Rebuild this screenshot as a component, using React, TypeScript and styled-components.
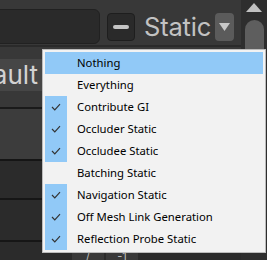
import React from "react";
import styled, { createGlobalStyle } from "styled-components";

const GlobalStyle = createGlobalStyle`
  html, body {
    margin: 0;
    padding: 0;
    background: #383838;
  }
`;

interface IItem {
  label: string;
  checked?: boolean;
  hover?: boolean;
}

const items: IItem[] = [
  { label: "Nothing", hover: true },
  { label: "Everything" },
  { label: "Contribute GI", checked: true },
  { label: "Occluder Static", checked: true },
  { label: "Occludee Static", checked: true },
  { label: "Batching Static" },
  { label: "Navigation Static", checked: true },
  { label: "Off Mesh Link Generation", checked: true },
  { label: "Reflection Probe Static", checked: true },
];

const Window = styled.div`
  position: relative;
  width: 267px;
  height: 260px;
  overflow: hidden;
  display: grid;
  grid-template-columns: 1fr 26px;
  background: #383838;
  font-family: Inter, "Noto Sans", sans-serif;
`;

const Inspector = styled.div`
  display: flex;
  flex-direction: column;
  min-width: 0;
`;

const Header = styled.div`
  height: 47px;
  display: flex;
  align-items: flex-start;
  padding-top: 9px;
  box-sizing: border-box;
  border-bottom: 2px solid #2a2a2a;
`;

const NameField = styled.div`
  width: 110px;
  height: 35px;
  margin-left: -10px;
  box-sizing: border-box;
  background: #2a2a2a;
  border: 1px solid #212121;
  border-radius: 6px;
`;

const Toggle = styled.div`
  margin: 4px 0 0 7px;
  width: 28px;
  height: 28px;
  box-sizing: border-box;
  background: #2a2a2a;
  border: 1px solid #1e1e1e;
  border-radius: 4px;
  display: flex;
  align-items: center;
  justify-content: center;
`;

const Dash = styled.div`
  width: 16px;
  height: 4px;
  border-radius: 2px;
  background: #c4c4c4;
`;

const Label = styled.div`
  margin: 3px 0 0 9px;
  height: 30px;
  line-height: 30px;
  font-size: 25.5px;
  color: #c2c2c2;
  letter-spacing: -0.2px;
`;

const ArrowButton = styled.div`
  margin: 4px 0 0 4px;
  width: 19px;
  height: 28px;
  border-radius: 4px;
  background: #5b5b5b;
  display: flex;
  align-items: center;
  justify-content: center;
`;

const Stripe = styled.div<{ $h: number; $bg: string; $line?: string }>`
  height: ${(p) => p.$h}px;
  flex: none;
  background: ${(p) => p.$bg};
  border-bottom: ${(p) => (p.$line ? `2px solid ${p.$line}` : "none")};
  box-sizing: border-box;
`;

const LayerRow = styled.div`
  height: 62px;
  flex: none;
  padding-top: 12px;
  box-sizing: border-box;
  border-bottom: 2px solid #1a1a1a;
`;

const LayerBox = styled.div`
  height: 32px;
  width: 130px;
  margin-left: -92px;
  background: #464646;
  border-radius: 4px;
  font-size: 26px;
  line-height: 32px;
  color: #d2d2d2;
  text-align: right;
  padding-right: 88px;
  box-sizing: content-box;
`;

const Footer = styled.div`
  flex: 1;
  display: flex;
  align-items: flex-start;
  padding: 9px 0 0 72px;
  gap: 2px;
  background: #2b2b2b;
`;

const FootCell = styled.div`
  width: 32px;
  height: 10px;
  background: #393939;
  color: #bdbdbd;
  font-size: 11px;
  line-height: 10px;
  text-align: center;
  overflow: hidden;
`;

const ScrollBar = styled.div`
  background: #2e2e2e;
  display: flex;
  flex-direction: column;
  align-items: center;
  padding-top: 3px;
  gap: 8px;
`;

const Thumb = styled.div`
  width: 19px;
  flex: 1;
  margin-bottom: 8px;
  border-radius: 10px 10px 0 0;
  background: #5e5e5e;
`;

const Menu = styled.div`
  position: absolute;
  left: 42px;
  top: 49px;
  width: 224px;
  box-sizing: border-box;
  padding: 2px;
  background: #f2f2f2;
  border: 1px solid #bcbcbc;
  font-family: "Noto Sans", "Open Sans", sans-serif;
`;

const Row = styled.div<{ $hover?: boolean }>`
  height: 22px;
  display: flex;
  align-items: center;
  background: ${(p) => (p.$hover ? "#91c9f7" : "transparent")};
`;

const CheckCell = styled.div<{ $on?: boolean }>`
  width: 22px;
  height: 22px;
  flex: none;
  display: flex;
  align-items: center;
  justify-content: center;
  background: ${(p) => (p.$on ? "#91c9f7" : "transparent")};
`;

const Text = styled.span`
  padding-left: 10px;
  font-size: 11.3px;
  line-height: 20px;
  color: #000;
  white-space: nowrap;
`;

const Check = () => (
  <svg width="10" height="8" viewBox="0 0 10 8">
    <path d="M1 4 L3.8 6.8 L9 1.2" fill="none" stroke="#333" strokeWidth="1.2" />
  </svg>
);

const App = () => (
  <>
    <GlobalStyle />
    <Window>
      <Inspector>
        <Header>
          <NameField />
          <Toggle>
            <Dash />
          </Toggle>
          <Label>Static</Label>
          <ArrowButton>
            <svg width="11" height="8" viewBox="0 0 11 8">
              <path d="M0 0 H11 L5.5 8 Z" fill="#c8c8c8" />
            </svg>
          </ArrowButton>
        </Header>
        <LayerRow>
          <LayerBox>Default</LayerBox>
        </LayerRow>
        <Stripe $h={52} $bg="#3c3c3c" $line="#151515" />
        <Stripe $h={39} $bg="#2b2b2b" $line="#161616" />
        <Stripe $h={42} $bg="#2b2b2b" $line="#161616" />
        <Footer>
          <FootCell>/</FootCell>
          <FootCell>-1</FootCell>
        </Footer>
      </Inspector>
      <ScrollBar>
        <svg width="16" height="9" viewBox="0 0 16 9">
          <path d="M8 0 L16 9 H0 Z" fill="#c2c2c2" />
        </svg>
        <Thumb />
      </ScrollBar>
      <Menu>
        {items.map((it) => (
          <Row key={it.label} $hover={it.hover}>
            <CheckCell $on={it.checked}>{it.checked && <Check />}</CheckCell>
            <Text>{it.label}</Text>
          </Row>
        ))}
      </Menu>
    </Window>
  </>
);

export default App;
